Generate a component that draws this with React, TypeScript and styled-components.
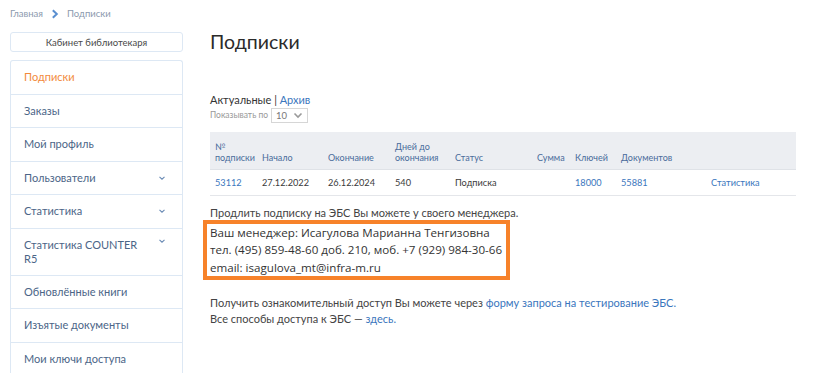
import React from "react";
import styled, { createGlobalStyle } from "styled-components";

const Global = createGlobalStyle`
  html, body { margin: 0; padding: 0; background: #fff; }
  body { font-family: "Lato", "Noto Sans", sans-serif; color: #333; }
  * { box-sizing: border-box; }
`;

const Page = styled.div`
  width: 814px;
  height: 373px;
  overflow: hidden;
  padding: 0 18px 0 10px;
`;

const Breadcrumbs = styled.div`
  height: 26px;
  display: flex;
  align-items: center;
  gap: 8px;
  font-size: 9.5px;
  color: #8c9aae;
  padding-top: 1px;
`;

const Columns = styled.div`
  display: flex;
  gap: 27px;
`;

const Sidebar = styled.div`
  width: 173px;
  flex: none;
  padding-top: 6px;
`;

const CabinetButton = styled.div`
  height: 20px;
  border: 1px solid #dde8f4;
  border-radius: 3px;
  display: flex;
  align-items: center;
  justify-content: center;
  font-size: 9.5px;
  color: #4a4a4a;
  margin-bottom: 8px;
`;

const Menu = styled.div`
  border: 1px solid #dde8f4;
  border-bottom: none;
  border-radius: 3px 3px 0 0;
`;

const MenuItem = styled.div<{ $active?: boolean; $tall?: boolean }>`
  height: ${(p) => (p.$tall ? "47px" : "33.5px")};
  border-bottom: 1px solid #dde8f4;
  display: flex;
  align-items: ${(p) => (p.$tall ? "flex-start" : "center")};
  padding: ${(p) => (p.$tall ? "9px 16px 0 13px" : "0 16px 0 13px")};
  font-size: 11px;
  line-height: 14px;
  color: ${(p) => (p.$active ? "#f28a3c" : "#4b6587")};
  justify-content: space-between;
`;

const MenuLabel = styled.span`
  max-width: 120px;
`;

const Main = styled.div`
  flex: 1;
  min-width: 0;
  padding-top: 2px;
`;

const Title = styled.h1`
  margin: 0;
  font-weight: 400;
  font-size: 19.5px;
  color: #2b2b2b;
  height: 65px;
  line-height: 28px;
`;

const Tabs = styled.div`
  font-size: 11px;
  color: #333;
  line-height: 14px;
`;

const Link = styled.a`
  color: #3a76bd;
  text-decoration: none;
`;

const ShowRow = styled.div`
  display: flex;
  align-items: center;
  gap: 3px;
  font-size: 8.5px;
  color: #999;
  height: 16px;
`;

const SelectBox = styled.div`
  width: 37px;
  height: 15px;
  border: 1px solid #d6d6d6;
  display: flex;
  align-items: center;
  justify-content: space-between;
  padding: 0 4px 0 4px;
  font-size: 9.5px;
  color: #777;
`;

const Table = styled.table`
  width: 100%;
  border-collapse: collapse;
  table-layout: fixed;
  margin-top: 9px;
`;

const Th = styled.th<{ $w?: number }>`
  width: ${(p) => (p.$w ? `${p.$w}px` : "auto")};
  background: #eceef2;
  font-weight: 400;
  font-size: 9px;
  line-height: 11px;
  color: #4a6c9b;
  text-align: left;
  vertical-align: bottom;
  padding: 0 0 6px 5px;
  height: 37px;
  border-bottom: 1px solid #dfe2e7;
  white-space: nowrap;
`;

const Td = styled.td`
  font-size: 9.2px;
  color: #3a3a3a;
  padding: 0 0 0 5px;
  height: 26px;
  border-bottom: 1px solid #e4e6ea;
  text-align: left;
  white-space: nowrap;
`;

const Para = styled.p`
  margin: 0;
  font-size: 11px;
  line-height: 16px;
  color: #444;
`;

const Note = styled(Para)`
  margin-top: 10px;
  line-height: 14px;
`;

const ManagerBox = styled.div`
  width: 307px;
  margin-left: -7px;
  border: 4.5px solid #f7822a;
  padding: 0 0 0 3px;
  font-family: "Open Sans", sans-serif;
  font-size: 11.6px;
  line-height: 17.5px;
  color: #333;
  white-space: nowrap;
`;

const Access = styled(Para)`
  margin-top: 15px;
`;

const Chevron = ({ color = "#6a8bb5" }: { color?: string }) => (
  <svg width="8" height="6" viewBox="0 0 8 6">
    <path d="M1.5 1.8 L4 4.2 L6.5 1.8" fill="none" stroke={color} strokeWidth="1.1" />
  </svg>
);

const SelectChevron = () => (
  <svg width="10" height="7" viewBox="0 0 10 7">
    <path d="M1.5 1.5 L5 5 L8.5 1.5" fill="none" stroke="#9a9a9a" strokeWidth="1.6" />
  </svg>
);

const menu = [
  { label: "Подписки", active: true },
  { label: "Заказы" },
  { label: "Мой профиль" },
  { label: "Пользователи", arrow: true },
  { label: "Статистика", arrow: true },
  { label: "Статистика COUNTER R5", arrow: true, tall: true },
  { label: "Обновлённые книги" },
  { label: "Изъятые документы" },
  { label: "Мои ключи доступа" },
];

export default function App() {
  return (
    <Page>
      <Global />
      <Breadcrumbs>
        <span>Главная</span>
        <svg width="8" height="10" viewBox="0 0 8 10">
          <path d="M1.8 1.2 L5.8 5 L1.8 8.8" fill="none" stroke="#5a8fd0" strokeWidth="2" />
        </svg>
        <span>Подписки</span>
      </Breadcrumbs>
      <Columns>
        <Sidebar>
          <CabinetButton>Кабинет библиотекаря</CabinetButton>
          <Menu>
            {menu.map((m) => (
              <MenuItem key={m.label} $active={m.active} $tall={m.tall}>
                <MenuLabel>{m.label}</MenuLabel>
                {m.arrow && <Chevron />}
              </MenuItem>
            ))}
          </Menu>
        </Sidebar>
        <Main>
          <Title>Подписки</Title>
          <Tabs>
            Актуальные | <Link href="#">Архив</Link>
          </Tabs>
          <ShowRow>
            Показывать по
            <SelectBox>
              10
              <SelectChevron />
            </SelectBox>
          </ShowRow>
          <Table>
            <thead>
              <tr>
                <Th $w={47}>№<br />подписки</Th>
                <Th $w={66}>Начало</Th>
                <Th $w={67}>Окончание</Th>
                <Th $w={60}>Дней до<br />окончания</Th>
                <Th $w={82}>Статус</Th>
                <Th $w={38}>Сумма</Th>
                <Th $w={46}>Ключей</Th>
                <Th $w={90}>Документов</Th>
                <Th></Th>
              </tr>
            </thead>
            <tbody>
              <tr>
                <Td><Link href="#">53112</Link></Td>
                <Td>27.12.2022</Td>
                <Td>26.12.2024</Td>
                <Td>540</Td>
                <Td>Подписка</Td>
                <Td></Td>
                <Td><Link href="#">18000</Link></Td>
                <Td><Link href="#">55881</Link></Td>
                <Td><Link href="#">Статистика</Link></Td>
              </tr>
            </tbody>
          </Table>
          <Note>Продлить подписку на ЭБС Вы можете у своего менеджера.</Note>
          <ManagerBox>
            Ваш менеджер: Исагулова Марианна Тенгизовна<br />
            тел. (495) 859-48-60 доб. 210, моб. +7 (929) 984-30-66<br />
            email: isagulova_mt@infra-m.ru
          </ManagerBox>
          <Access>
            Получить ознакомительный доступ Вы можете через{" "}
            <Link href="#">форму запроса на тестирование ЭБС.</Link>
            <br />
            Все способы доступа к ЭБС — <Link href="#">здесь.</Link>
          </Access>
        </Main>
      </Columns>
    </Page>
  );
}
